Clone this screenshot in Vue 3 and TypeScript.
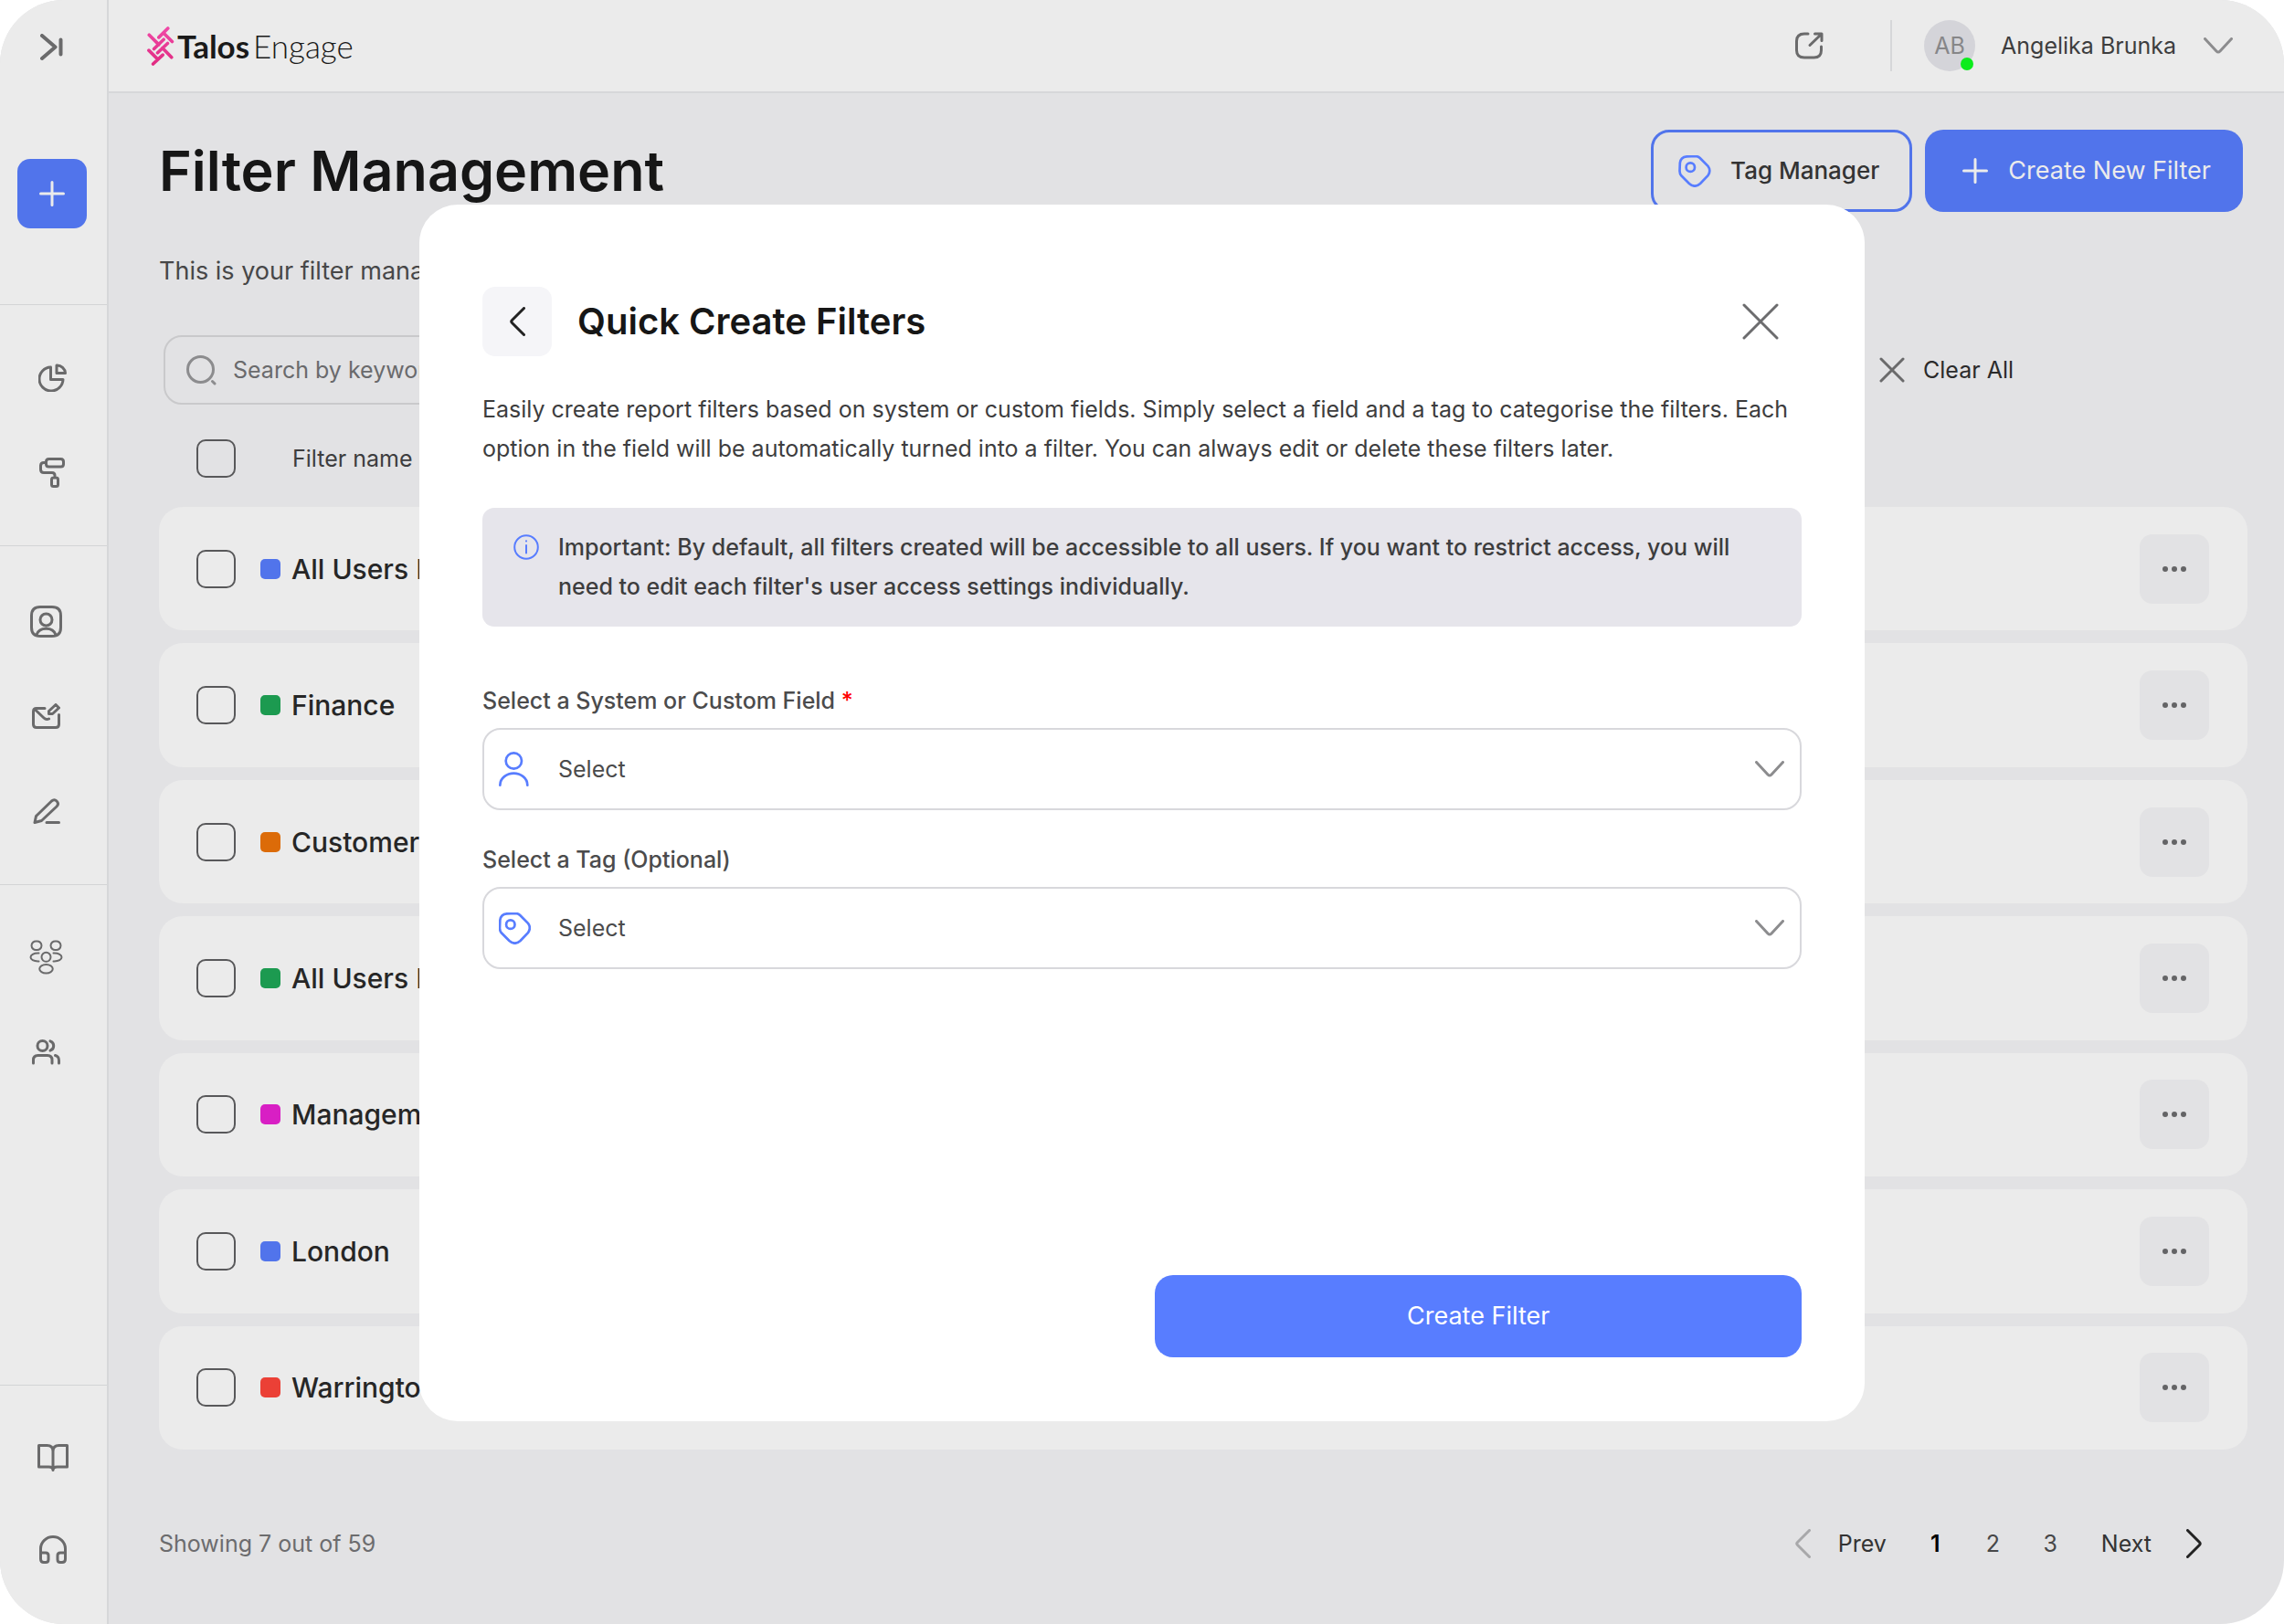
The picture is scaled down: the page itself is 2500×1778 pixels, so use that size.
<script setup lang="ts">
import { ref } from 'vue'

interface Shape {
  label: string
  w: number
  h: number
  d: string
}

interface FilterRow {
  name: string
  color: string
}

const reports: Shape[] = [
  {
    label: 'Reports',
    w: 31,
    h: 31,
    d: 'M13.5 4V17.500H27A13 13 0 1 1 13.500 4ZM20 2V10.500H29.500A9 9 0 0 0 20 2Z',
  },
  {
    label: 'Branding',
    w: 28,
    h: 33,
    d: 'M10.5 1.500H23.500Q26.500 1.500 26.500 4.500V7Q26.500 10 23.500 10H10.500Q7.500 10 7.500 7V4.500Q7.500 1.500 10.500 1.500ZM7.500 5.500H5Q1.500 5.500 1.500 9V13Q1.500 16.500 5 16.500H14Q17 16.500 17 19.500V22M15.500 22H18.500Q20.500 22 20.500 24V29.500Q20.500 31.500 18.500 31.500H15.500Q13.500 31.500 13.500 29.500V24Q13.500 22 15.500 22Z',
  },
]

const content: Shape[] = [
  {
    label: 'Profiles',
    w: 35,
    h: 35,
    d: 'M11 1.500H24Q33.500 1.500 33.500 11V24Q33.500 33.500 24 33.500H11Q1.500 33.500 1.500 24V11Q1.500 1.500 11 1.500ZM17.500 9A6.500 6.500 0 1 1 17.500 22A6.500 6.500 0 1 1 17.500 9ZM7 32C10 23 25 23 28 32',
  },
  {
    label: 'Compose',
    w: 31,
    h: 28,
    d: 'M14 5.500H5Q1.500 5.500 1.500 9V23Q1.500 26.500 5 26.500H26Q29.500 26.500 29.500 23V12.500M3 6.500L13 16Q15.500 18.500 18.500 17M18.500 8.500L26 1.500L29.500 5L22.500 11.500H18.500Z',
  },
  {
    label: 'Edit',
    w: 30,
    h: 28,
    d: 'M2 26.500L3.500 19.500L20.500 3Q23.500 0.500 26 3Q29 6 26 9L9.500 24.500ZM15 26.500H28.500',
  },
]

const people: Shape[] = [
  {
    label: 'Teams',
    w: 37,
    h: 38,
    d: 'M8 1.500A4.800 4.800 0 1 1 8 11A4.800 4.800 0 1 1 8 1.500ZM29 1.500A4.800 4.800 0 1 1 29 11A4.800 4.800 0 1 1 29 1.500ZM18.500 13.800A5 5 0 1 1 18.500 23.800A5 5 0 1 1 18.500 13.800ZM18.500 27A7.200 4.700 0 1 1 18.500 36.500A7.200 4.700 0 1 1 18.500 27ZM10.500 14.500C-1.500 14 -1.500 24 10.500 23.500M26.500 14.500C38.500 14 38.500 24 26.500 23.500',
  },
  {
    label: 'Users',
    w: 31,
    h: 28,
    d: 'M11.500 1.500A5.500 5.500 0 1 1 11.500 12.500A5.500 5.500 0 1 1 11.500 1.500ZM1.500 26V22.500Q1.500 17.500 6.500 17.500H17Q22 17.500 22 22.500V26M20 1.800A5.500 5.500 0 0 1 20 12.200M25.500 17.500Q29.500 18.500 29.500 23V26',
  },
]

const support: Shape[] = [
  {
    label: 'Guides',
    w: 34,
    h: 30,
    d: 'M1.500 1.500H10.500Q17 1.500 17 8V28.500Q17 25 12.500 25H1.500ZM32.500 1.500H23.500Q17 1.500 17 8V28.500Q17 25 21.500 25H32.500Z',
  },
  {
    label: 'Help',
    w: 30,
    h: 31,
    d: 'M1.500 20V14.500A13.500 13 0 0 1 28.500 14.500V20M1.500 19H7Q10 19 10 22V26.500Q10 29.500 7 29.500H5Q1.500 29.500 1.500 26ZM28.500 19H23Q20 19 20 22V26.500Q20 29.500 23 29.500H25Q28.500 29.500 28.500 26Z',
  },
]

const sections = [
  { key: 'reports', items: reports },
  { key: 'content', items: content },
  { key: 'people', items: people },
  { key: 'support', items: support },
]

const filters: FilterRow[] = [
  { name: 'All Users HQ', color: '#5174eb' },
  { name: 'Finance', color: '#1c9a50' },
  { name: 'Customer', color: '#dc6b08' },
  { name: 'All Users HQ', color: '#1c9a50' },
  { name: 'Management', color: '#d81fc4' },
  { name: 'London', color: '#5174eb' },
  { name: 'Warrington', color: '#eb4036' },
]

const tagPath =
  'M26 4L54 3Q63 3 69 9L95 35Q106 50 95 66L70 92Q52 108 34 92L9 67Q3 60 3 51L4 25Q6 6 26 4ZM38 25A14 14 0 1 1 38 53A14 14 0 1 1 38 25Z'

const keyword = ref('')
const field = ref('')
const tag = ref('')
</script>

<template>
  <div class="app">
    <nav class="sidebar" aria-label="Main">
      <div class="side-top">
        <button class="icon-btn" type="button" aria-label="Expand menu">
          <svg width="26" height="30" viewBox="0 0 26 30" class="line dark thick">
            <path d="M2 2L16.500 14.500L2 27M22.500 6.500V22.500" />
          </svg>
        </button>
        <button class="add-btn" type="button" aria-label="Add">
          <svg width="28" height="28" viewBox="0 0 28 28" class="line light">
            <path d="M14 1.500V26.500M1.500 14H26.500" />
          </svg>
        </button>
      </div>
      <div v-for="s in sections" :key="s.key" class="side-group" :class="s.key">
        <a v-for="i in s.items" :key="i.label" href="#" class="side-link" :aria-label="i.label">
          <svg :width="i.w" :height="i.h" :viewBox="`0 0 ${i.w} ${i.h}`" class="line dark">
            <path :d="i.d" />
          </svg>
        </a>
      </div>
    </nav>

    <div class="page">
      <header class="topbar">
        <a href="#" class="brand">
          <svg width="31" height="43" viewBox="0 0 92 130">
            <defs>
              <linearGradient id="brand-pink" gradientUnits="userSpaceOnUse" x1="0" y1="0" x2="0" y2="130">
                <stop offset="0" stop-color="#f04aa8" />
                <stop offset="1" stop-color="#e02a80" />
              </linearGradient>
            </defs>
            <path
              d="M71 6L41 36M57 22L85 50M9 28L41 60M57 43L25 74M70 56L37 87M53 71L83 102M8 79L37 108M54 94L22 124"
              fill="none"
              stroke="url(#brand-pink)"
              stroke-width="11"
              stroke-linecap="round"
            />
          </svg>
          <span class="wordmark"><b>Talos</b><span>Engage</span></span>
        </a>
        <div class="account">
          <button class="icon-btn" type="button" aria-label="Open in new window">
            <svg width="31" height="30" viewBox="0 0 31 30" class="line dark">
              <path
                d="M14 2H10Q1.500 2 1.500 10V20Q1.500 28 10 28H20.500Q28.500 28 28.500 20V16M16 14.500L28 3M21.500 2H29V9.500"
              />
            </svg>
          </button>
          <button class="profile" type="button">
            <span class="avatar">AB<i></i></span>
            <span>Angelika Brunka</span>
            <svg width="32" height="18" viewBox="0 0 32 18" class="line mid">
              <path d="M1.500 1.500L14 15Q16 17 18 15L30.500 1.500" />
            </svg>
          </button>
        </div>
      </header>

      <main class="content">
        <div class="title-row">
          <h1>Filter Management</h1>
          <div class="actions">
            <button class="btn outline" type="button">
              <svg width="36" height="35" viewBox="0 0 104 104" class="tag"><path :d="tagPath" /></svg>
              Tag Manager
            </button>
            <button class="btn primary" type="button">
              <svg width="28" height="28" viewBox="0 0 28 28" class="line light">
                <path d="M14 1.500V26.500M1.500 14H26.500" />
              </svg>
              Create New Filter
            </button>
          </div>
        </div>
        <p class="intro">This is your filter management page</p>

        <div class="tools">
          <label class="search">
            <svg width="33" height="33" viewBox="0 0 33 33" class="line mid">
              <circle cx="15.500" cy="15.500" r="14" /><path d="M28.500 28.500L31 31" />
            </svg>
            <input v-model="keyword" type="search" placeholder="Search by keyword" aria-label="Search by keyword" />
          </label>
          <button class="clear" type="button">
            <svg width="28" height="28" viewBox="0 0 28 28" class="line dark"><path d="M2 2L26 26M26 2L2 26" /></svg>
            Clear All
          </button>
        </div>

        <table class="filters">
          <thead>
            <tr>
              <th class="pick"><input type="checkbox" aria-label="Select all filters" /></th>
              <th class="name-head">Filter name</th>
              <th class="more"></th>
            </tr>
          </thead>
          <tbody>
            <tr v-for="(f, i) in filters" :key="i">
              <td class="pick"><input type="checkbox" :aria-label="`Select ${f.name}`" /></td>
              <td>
                <div class="name"><i :style="{ background: f.color }"></i>{{ f.name }}</div>
              </td>
              <td class="more">
                <button type="button" :aria-label="`Options for ${f.name}`">
                  <svg width="28" height="8" viewBox="0 0 28 8" fill="#646466">
                    <circle cx="4" cy="4" r="3" /><circle cx="14" cy="4" r="3" /><circle cx="24" cy="4" r="3" />
                  </svg>
                </button>
              </td>
            </tr>
          </tbody>
        </table>

        <footer class="foot">
          <span>Showing 7 out of 59</span>
          <nav class="pager" aria-label="Pages">
            <a href="#" class="step prev">
              <svg width="17" height="32" viewBox="0 0 17 32" class="line faint">
                <path d="M15.500 1.500L2.500 14.500Q1 16 2.500 17.500L15.500 30.500" />
              </svg>
              Prev
            </a>
            <a href="#" class="num current" aria-current="page">1</a>
            <a href="#" class="num">2</a>
            <a href="#" class="num">3</a>
            <a href="#" class="step next">
              Next
              <svg width="17" height="32" viewBox="0 0 17 32" class="line ink">
                <path d="M1.500 1.500L14.500 14.500Q16 16 14.500 17.500L1.500 30.500" />
              </svg>
            </a>
          </nav>
        </footer>
      </main>
    </div>

    <div class="overlay">
      <section class="modal" role="dialog" aria-modal="true" aria-labelledby="modal-title">
        <div class="modal-head">
          <button class="back" type="button" aria-label="Back">
            <svg width="17" height="32" viewBox="0 0 17 32" class="line ink">
              <path d="M15.500 1.500L2.500 14.500Q1 16 2.500 17.500L15.500 30.500" />
            </svg>
          </button>
          <h2 id="modal-title">Quick Create Filters</h2>
          <button class="close" type="button" aria-label="Close">
            <svg width="40" height="40" viewBox="0 0 40 40" class="line grey">
              <path d="M2 2L38 38M38 2L2 38" />
            </svg>
          </button>
        </div>
        <p class="lead">
          Easily create report filters based on system or custom fields. Simply select a field and a tag to categorise
          the filters. Each option in the field will be automatically turned into a filter. You can always edit or
          delete these filters later.
        </p>
        <div class="notice">
          <svg width="28" height="28" viewBox="0 0 28 28" class="line blue">
            <circle cx="14" cy="14" r="12.800" /><path d="M14 12V20.500M14 7.200V7.600" />
          </svg>
          <p>
            Important: By default, all filters created will be accessible to all users. If you want to restrict access,
            you will need to edit each filter's user access settings individually.
          </p>
        </div>
        <form class="form" @submit.prevent>
          <label for="field">Select a System or Custom Field <em>*</em></label>
          <div class="select">
            <svg width="33" height="38" viewBox="0 0 99 114" class="line blue user">
              <circle cx="49" cy="30" r="26" /><path d="M4 110C4 86 27 71 49 71S94 86 94 110" />
            </svg>
            <select id="field" v-model="field">
              <option value="">Select</option>
            </select>
            <svg width="32" height="18" viewBox="0 0 32 18" class="line mid chev">
              <path d="M1.500 1.500L14 15Q16 17 18 15L30.500 1.500" />
            </svg>
          </div>
          <label for="tag">Select a Tag (Optional)</label>
          <div class="select">
            <svg width="35" height="35" viewBox="0 0 104 104" class="tag"><path :d="tagPath" /></svg>
            <select id="tag" v-model="tag">
              <option value="">Select</option>
            </select>
            <svg width="32" height="18" viewBox="0 0 32 18" class="line mid chev">
              <path d="M1.500 1.500L14 15Q16 17 18 15L30.500 1.500" />
            </svg>
          </div>
          <button class="submit" type="submit">Create Filter</button>
        </form>
      </section>
    </div>
  </div>
</template>

<style>
body {
  margin: 0;
  background: #fff;
}
</style>

<style scoped>
* {
  box-sizing: border-box;
}
.app {
  position: relative;
  display: flex;
  min-height: 100vh;
  overflow: hidden;
  border-radius: 70px;
  background: #e2e2e4;
  color: #3d3d3e;
  font: 400 25px/40px Inter, sans-serif;
}
button,
input,
select {
  margin: 0;
  padding: 0;
  border: 0;
  background: none;
  color: inherit;
  font: inherit;
}
a {
  color: inherit;
  text-decoration: none;
}
svg {
  display: block;
  flex: none;
}
.line {
  fill: none;
  stroke-width: 3;
  stroke-linecap: round;
  stroke-linejoin: round;
}
.thick {
  stroke-width: 4;
}
.dark {
  stroke: #6a6a6b;
}
.light {
  stroke: #ebebeb;
}
.mid {
  stroke: #8c8c8e;
}
.faint {
  stroke: #a8a8aa;
}
.ink {
  stroke: #222;
}
.grey {
  stroke: #6c6c6e;
}
.blue {
  stroke: #587dff;
  stroke-width: 2;
}
.user {
  stroke-width: 8;
}
.tag {
  fill: none;
  stroke: #587dff;
  stroke-width: 8;
}

/* Sidebar */
.sidebar {
  display: flex;
  flex-direction: column;
  flex: none;
  width: 119px;
  border-right: 2px solid #d6d7d9;
  background: #ebebeb;
}
.side-top {
  display: flex;
  flex-direction: column;
  align-items: center;
  gap: 84px;
  padding: 14px 3px 83px 0;
}
.icon-btn {
  display: grid;
  place-items: center;
  width: 76px;
  height: 76px;
}
.add-btn {
  display: grid;
  place-items: center;
  width: 76px;
  height: 76px;
  border-radius: 14px;
  background: #5174eb;
}
.side-group {
  display: flex;
  flex-direction: column;
  align-items: center;
  padding: 27px 3px 28px 0;
  border-top: 1px solid #d3d4d6;
}
.side-link {
  display: grid;
  place-items: center;
  width: 76px;
  height: 104px;
}
.content.side-group,
.people {
  padding: 30px 16px 28px 0;
}
.people {
  flex: 1;
  padding-top: 27px;
}
.people .dark {
  stroke-width: 2;
}
.people .side-link:last-child .dark {
  stroke-width: 3;
}
.support {
  padding: 28px 2px 31px 0;
}
.support .side-link {
  height: 101px;
}

/* Top bar */
.page {
  flex: 1;
  min-width: 0;
}
.topbar {
  display: flex;
  align-items: center;
  justify-content: space-between;
  height: 102px;
  padding: 0 56px 0 41px;
  border-bottom: 2px solid #d6d7d9;
  background: #ebebeb;
}
.brand {
  display: flex;
  align-items: center;
  gap: 3px;
  color: #1a1a1a;
}
.wordmark {
  display: flex;
  gap: 4px;
  font: 300 35px/40px Lato, sans-serif;
}
.wordmark b {
  font-weight: 700;
}
.account {
  display: flex;
  align-items: center;
  gap: 51px;
}
.profile {
  display: flex;
  align-items: center;
  gap: 28px;
  height: 56px;
  padding-left: 35px;
  border-left: 2px solid #d6d7d9;
}
.profile svg {
  margin-left: 2px;
}
.avatar {
  position: relative;
  width: 56px;
  height: 56px;
  border-radius: 50%;
  background: #d4d4d9;
  color: #868688;
  line-height: 56px;
  text-align: center;
}
.avatar i {
  position: absolute;
  right: 2px;
  bottom: 1px;
  width: 14px;
  height: 14px;
  border-radius: 50%;
  background: #0cec1c;
}

/* Page content */
main.content {
  padding: 40px 40px 0 55px;
}
.title-row {
  display: flex;
  align-items: center;
  justify-content: space-between;
  padding-right: 5px;
}
h1 {
  margin: 0;
  color: #161616;
  font-size: 61px;
  font-weight: 600;
  line-height: 90px;
}
.actions {
  display: flex;
  gap: 14px;
}
.btn {
  display: flex;
  align-items: center;
  height: 90px;
  border-radius: 20px;
  font-size: 26px;
}
.outline {
  gap: 21px;
  padding: 0 33px 0 27px;
  border: 3px solid #5174eb;
  color: #333;
  font-weight: 500;
}
.primary {
  gap: 22px;
  padding: 0 35px 0 41px;
  background: #5174eb;
  color: #ebebeb;
  font-size: 27px;
}
.intro {
  margin: 45px 0 0;
  color: #474748;
  font-size: 27px;
}
.tools {
  display: flex;
  align-items: center;
  justify-content: space-between;
  margin-top: 50px;
  padding: 0 256px 0 5px;
}
.search {
  display: flex;
  align-items: center;
  gap: 18px;
  width: 75%;
  height: 76px;
  padding: 0 23px;
  border: 2px solid #c9c9cb;
  border-radius: 20px;
}
.search input {
  flex: 1;
  outline: 0;
}
.search input::placeholder {
  color: #6a6a6c;
  opacity: 1;
}
.clear {
  display: flex;
  align-items: center;
  gap: 20px;
  color: #2b2b2b;
}

/* Filter list */
.filters {
  width: 100%;
  height: 1152px;
  margin-top: 6px;
  border-spacing: 0 14px;
}
.filters th,
.filters td {
  height: 135px;
  padding: 0;
  text-align: left;
}
.filters th {
  height: 78px;
  font-weight: 400;
}
.filters td {
  background: #ebebeb;
}
.filters .pick {
  width: 111px;
  padding-left: 41px;
  border-radius: 26px 0 0 26px;
}
.pick input {
  display: block;
  width: 43px;
  height: 42px;
  border: 2px solid #58585a;
  border-radius: 10px;
  appearance: none;
}
.filters .name-head {
  padding-left: 35px;
}
.name {
  display: flex;
  align-items: center;
  gap: 12px;
  color: #262626;
  font-size: 30px;
  font-weight: 500;
}
.name i {
  width: 22px;
  height: 22px;
  border-radius: 5px;
}
.filters .more {
  width: 118px;
  border-radius: 0 26px 26px 0;
}
.more button {
  display: grid;
  place-items: center;
  width: 76px;
  height: 76px;
  border-radius: 14px;
  background: #e2e2e4;
}
.foot {
  display: flex;
  align-items: center;
  justify-content: space-between;
  margin-top: 69px;
  padding-right: 50px;
  color: #6c6c6e;
}
.pager {
  display: flex;
  align-items: center;
  color: #474748;
}
.step {
  display: flex;
  align-items: center;
  color: #333;
}
.prev {
  gap: 30px;
  margin-right: 22px;
}
.next {
  gap: 38px;
  margin-left: 24px;
}
.num {
  width: 63px;
  text-align: center;
}
.current {
  color: #000;
  font-weight: 600;
}

/* Dialog */
.overlay {
  position: absolute;
  inset: 0;
  display: grid;
  place-items: center;
  padding-top: 2px;
}
.modal {
  display: flex;
  flex-direction: column;
  width: 100%;
  max-width: 1582px;
  min-height: 1332px;
  padding: 90px 69px 70px;
  border-radius: 42px;
  background: #fff;
}
.modal-head {
  display: flex;
  align-items: center;
  gap: 28px;
}
.back {
  display: grid;
  place-items: center;
  width: 76px;
  height: 76px;
  border-radius: 14px;
  background: #f5f5f8;
}
h2 {
  flex: 1;
  margin: 0;
  color: #161616;
  font-size: 40px;
  font-weight: 600;
}
.close {
  padding-right: 25px;
}
.lead {
  margin: 37px 0 0;
  line-height: 43px;
}
.notice {
  display: flex;
  gap: 21px;
  margin-top: 43px;
  padding: 22px 34px;
  border-radius: 13px;
  background: #e6e5eb;
  font-weight: 500;
}
.notice svg {
  margin-top: 7px;
}
.notice p {
  margin: 0;
  line-height: 43px;
}
.form {
  display: flex;
  flex: 1;
  flex-direction: column;
  padding-top: 61px;
}
.form label {
  color: #4b4b4c;
  font-weight: 500;
}
.form em {
  color: #f00;
  font-style: normal;
}
.select {
  position: relative;
  display: flex;
  align-items: center;
  height: 90px;
  margin: 10px 0 34px;
  padding-left: 16px;
  border: 2px solid #d8d8dc;
  border-radius: 20px;
}
.select select {
  position: absolute;
  inset: 0;
  width: 100%;
  padding-left: 81px;
  color: #4b4b4c;
  outline: 0;
  appearance: none;
}
.chev {
  margin: 0 17px 0 auto;
}
.submit {
  align-self: flex-end;
  width: 49%;
  height: 90px;
  margin-top: auto;
  border-radius: 20px;
  background: #587dff;
  color: #fff;
  font-size: 27px;
}
</style>
